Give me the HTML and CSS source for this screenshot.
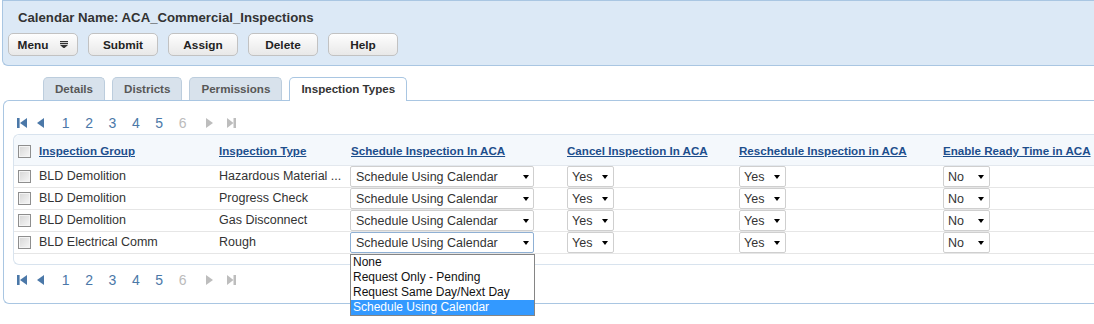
FILE: index.html
```html
<!DOCTYPE html>
<html>
<head>
<meta charset="utf-8">
<title>Calendar</title>
<link rel="stylesheet" href="styles.css">
</head>
<body>
<div class="page">
  <div class="hdr">
    <div class="title">Calendar Name: ACA_Commercial_Inspections</div>
    <div class="btns">
      <button class="btn">Menu <svg class="menu-ico" width="8" height="7" viewBox="0 0 8 7"><rect x="0" y="0" width="8" height="1.2" fill="#333"/><rect x="0" y="2" width="8" height="1.2" fill="#333"/><path d="M0 4 L8 4 L4 7.5 Z" fill="#333"/></svg></button>
      <button class="btn">Submit</button>
      <button class="btn">Assign</button>
      <button class="btn">Delete</button>
      <button class="btn">Help</button>
    </div>
  </div>

  <div class="tabs">
    <div class="tab">Details</div>
    <div class="tab">Districts</div>
    <div class="tab">Permissions</div>
    <div class="tab active">Inspection Types</div>
  </div>

  <div class="panel">
    <div class="pager">
      <svg class="pg-first" width="10" height="10" viewBox="0 0 10 10"><rect x="0" y="0" width="2.6" height="10"/><path d="M10 0 L3 5 L10 10 Z"/></svg>
      <svg class="pg-prev" width="7" height="10" viewBox="0 0 7 10"><path d="M7 0 L0 5 L7 10 Z"/></svg>
      <span class="pg-num">1</span><span class="pg-num">2</span><span class="pg-num">3</span><span class="pg-num">4</span><span class="pg-num">5</span><span class="pg-num off">6</span>
      <svg class="pg-next" width="7" height="10" viewBox="0 0 7 10"><path d="M0 0 L7 5 L0 10 Z"/></svg>
      <svg class="pg-last" width="9" height="10" viewBox="0 0 9 10"><path d="M0 0 L6.5 5 L0 10 Z"/><rect x="6.5" y="0" width="2.5" height="10"/></svg>
    </div>

    <div class="box">
      <div class="row head">
        <div class="c0"><span class="cb"></span></div>
        <div><a class="lnk">Inspection Group</a></div>
        <div><a class="lnk">Inspection Type</a></div>
        <div class="hc"><a class="lnk">Schedule Inspection In ACA</a></div>
        <div><a class="lnk">Cancel Inspection In ACA</a></div>
        <div><a class="lnk">Reschedule Inspection in ACA</a></div>
        <div><a class="lnk">Enable Ready Time in ACA</a></div>
      </div>

      <div class="row">
        <div class="c0"><span class="cb"></span></div>
        <div class="txt">BLD Demolition</div>
        <div class="txt">Hazardous Material ...</div>
        <div><span class="sel wide">Schedule Using Calendar<i class="arr"></i></span></div>
        <div><span class="sel small">Yes<i class="arr"></i></span></div>
        <div><span class="sel small">Yes<i class="arr"></i></span></div>
        <div><span class="sel small">No<i class="arr"></i></span></div>
      </div>

      <div class="row">
        <div class="c0"><span class="cb"></span></div>
        <div class="txt">BLD Demolition</div>
        <div class="txt">Progress Check</div>
        <div><span class="sel wide">Schedule Using Calendar<i class="arr"></i></span></div>
        <div><span class="sel small">Yes<i class="arr"></i></span></div>
        <div><span class="sel small">Yes<i class="arr"></i></span></div>
        <div><span class="sel small">No<i class="arr"></i></span></div>
      </div>

      <div class="row">
        <div class="c0"><span class="cb"></span></div>
        <div class="txt">BLD Demolition</div>
        <div class="txt">Gas Disconnect</div>
        <div><span class="sel wide">Schedule Using Calendar<i class="arr"></i></span></div>
        <div><span class="sel small">Yes<i class="arr"></i></span></div>
        <div><span class="sel small">Yes<i class="arr"></i></span></div>
        <div><span class="sel small">No<i class="arr"></i></span></div>
      </div>

      <div class="row">
        <div class="c0"><span class="cb"></span></div>
        <div class="txt">BLD Electrical Comm</div>
        <div class="txt">Rough</div>
        <div class="dd-host">
          <span class="sel wide open">Schedule Using Calendar<i class="arr"></i></span>
          <ul class="dd">
            <li>None</li>
            <li>Request Only - Pending</li>
            <li>Request Same Day/Next Day</li>
            <li class="hi">Schedule Using Calendar</li>
          </ul>
        </div>
        <div><span class="sel small">Yes<i class="arr"></i></span></div>
        <div><span class="sel small">Yes<i class="arr"></i></span></div>
        <div><span class="sel small">No<i class="arr"></i></span></div>
      </div>
    </div>

    <div class="pager bottom">
      <svg class="pg-first" width="10" height="10" viewBox="0 0 10 10"><rect x="0" y="0" width="2.6" height="10"/><path d="M10 0 L3 5 L10 10 Z"/></svg>
      <svg class="pg-prev" width="7" height="10" viewBox="0 0 7 10"><path d="M7 0 L0 5 L7 10 Z"/></svg>
      <span class="pg-num">1</span><span class="pg-num">2</span><span class="pg-num">3</span><span class="pg-num">4</span><span class="pg-num">5</span><span class="pg-num off">6</span>
      <svg class="pg-next" width="7" height="10" viewBox="0 0 7 10"><path d="M0 0 L7 5 L0 10 Z"/></svg>
      <svg class="pg-last" width="9" height="10" viewBox="0 0 9 10"><path d="M0 0 L6.5 5 L0 10 Z"/><rect x="6.5" y="0" width="2.5" height="10"/></svg>
    </div>
  </div>
</div>
</body>
</html>
```

FILE: styles.css
```css
* { box-sizing: border-box; }

html, body { margin: 0; }

body {
  font-family: "Liberation Sans", Arial, sans-serif;
  font-size: 12px;
  color: #333;
  background: #fff;
}

.page {
  width: 1094px;
  min-height: 324px;
  overflow-x: clip;
}

/* header */
.hdr {
  margin: 0 -30px 0 2px;
  background: #dce9f6;
  border: 1px solid #a9c6e2;
  border-right: none;
  border-radius: 0 0 0 6px;
  padding: 8px 0 9px 15px;
}
.title {
  font-size: 13.2px;
  font-weight: bold;
  line-height: 18px;
  color: #333;
}
.btns {
  display: flex;
  gap: 10px;
  margin: 6px 0 0 -10px;
}
.btn {
  width: 70px;
  height: 23px;
  padding: 0;
  border: 1px solid #c2c2c2;
  border-radius: 5px;
  background: linear-gradient(#fefefe, #e8e8e8);
  font: bold 11.8px "Liberation Sans", Arial, sans-serif;
  color: #222;
  display: flex;
  align-items: center;
  justify-content: center;
  gap: 12px;
}
.menu-ico { display: block; }

/* tabs */
.tabs {
  display: flex;
  align-items: flex-start;
  gap: 7px;
  margin: 11px 0 0 43px;
  position: relative;
  z-index: 1;
}
.tab {
  height: 23px;
  padding: 0 11px;
  border: 1px solid #bccddd;
  border-bottom: none;
  border-radius: 5px 5px 0 0;
  background: #d8e2ec;
  font-weight: bold;
  font-size: 11.6px;
  color: #575757;
  line-height: 22px;
}
.tab.active {
  height: 24px;
  background: #fff;
  border-color: #a9c6e2;
  color: #333;
}

/* panel */
.panel {
  margin: -1px -30px 0 3px;
  border: 1px solid #a9c6e2;
  border-right: none;
  border-radius: 6px 0 0 6px;
  padding: 14px 0 15px 9px;
}

.pager {
  display: flex;
  align-items: center;
  height: 16px;
  padding-left: 4px;
}
.pager.bottom { margin-top: 7px; }
.pager svg { display: block; }
.pg-first, .pg-prev { fill: #4b78a8; }
.pg-prev { margin-left: 10px; margin-right: 10px; }
.pg-next, .pg-last { fill: #bdbdbd; }
.pg-next { margin-left: 12px; }
.pg-last { margin-left: 14px; }
.pg-num {
  width: 23.4px;
  text-align: center;
  font-size: 14px;
  line-height: 16px;
  color: #4b78a8;
}
.pg-num.off { color: #bbb; }

/* grid box */
.box {
  margin-top: 3px;
  border: 1px solid #d8e3ee;
  border-right: none;
  border-radius: 6px 0 0 6px;
  padding-bottom: 10px;
}
.row {
  display: grid;
  grid-template-columns: 25px 180px 131px 217px 172px 204px 1fr;
  align-items: center;
  height: 22px;
  border-bottom: 1px solid #e6e6e6;
}
.row.head {
  height: 31px;
  padding-top: 2px;
  background: #f4f8fc;
  border-radius: 6px 0 0 0;
  border-bottom-color: #e3e8ee;
}
.c0 { padding-left: 4px; display: flex; align-items: center; }
.hc { padding-left: 1px; }
.lnk {
  color: #1d4e8c;
  font-weight: bold;
  font-size: 11.6px;
  text-decoration: underline;
  white-space: nowrap;
}
.txt {
  white-space: nowrap;
  color: #333;
  font-size: 12.5px;
  padding-bottom: 1px;
}

.cb {
  display: block;
  width: 13px;
  height: 13px;
  border: 1px solid #8e8e8e;
  background: linear-gradient(135deg, #d6d6d6, #f7f7f7);
  box-shadow: inset 0 0 0 1px #f4f4f4;
}

.sel {
  display: flex;
  align-items: center;
  justify-content: space-between;
  height: 21px;
  padding: 0 4px 0 5px;
  border: 1px solid #cfcfcf;
  border-radius: 2px;
  background: #fff;
  color: #333;
  font-size: 12.5px;
  white-space: nowrap;
}
.sel.wide { width: 184px; }
.sel.small { width: 47px; padding-left: 4px; padding-right: 5px; }
.sel.open { border-color: #8fb0d4; }
.arr {
  display: block;
  width: 0;
  height: 0;
  border-top: 4px solid #000;
  border-left: 3.5px solid transparent;
  border-right: 3.5px solid transparent;
}

.dd-host { position: relative; }
.dd {
  position: absolute;
  top: 22px;
  left: 0;
  z-index: 5;
  width: 185px;
  margin: 0;
  padding: 0;
  list-style: none;
  background: #fff;
  border: 1px solid #858585;
}
.dd li {
  height: 15px;
  line-height: 15px;
  padding-left: 2px;
  color: #111;
  font-size: 12px;
  white-space: nowrap;
}
.dd li.hi {
  background: #3399ff;
  color: #fff;
}
```
